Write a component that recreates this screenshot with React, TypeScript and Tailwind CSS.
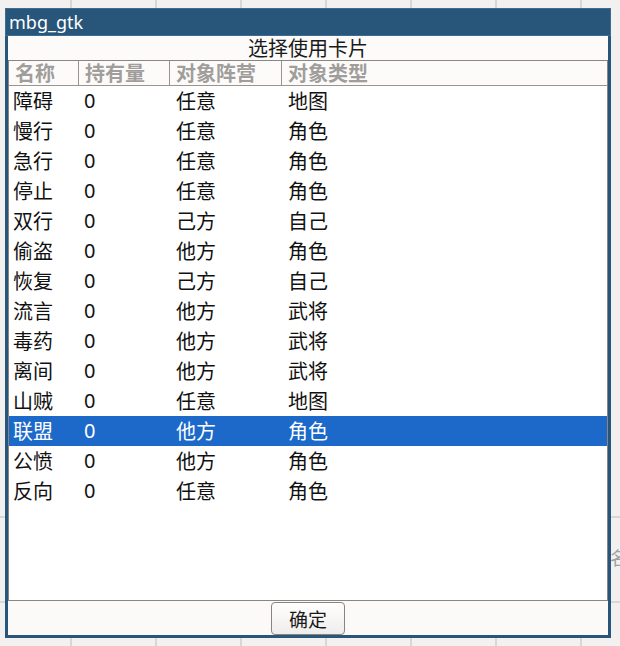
import React from "react";

interface Card {
  name: string;
  count: number;
  camp: string;
  kind: string;
}

const cards: Card[] = [
  { name: "障碍", count: 0, camp: "任意", kind: "地图" },
  { name: "慢行", count: 0, camp: "任意", kind: "角色" },
  { name: "急行", count: 0, camp: "任意", kind: "角色" },
  { name: "停止", count: 0, camp: "任意", kind: "角色" },
  { name: "双行", count: 0, camp: "己方", kind: "自己" },
  { name: "偷盗", count: 0, camp: "他方", kind: "角色" },
  { name: "恢复", count: 0, camp: "己方", kind: "自己" },
  { name: "流言", count: 0, camp: "他方", kind: "武将" },
  { name: "毒药", count: 0, camp: "他方", kind: "武将" },
  { name: "离间", count: 0, camp: "他方", kind: "武将" },
  { name: "山贼", count: 0, camp: "任意", kind: "地图" },
  { name: "联盟", count: 0, camp: "他方", kind: "角色" },
  { name: "公愤", count: 0, camp: "他方", kind: "角色" },
  { name: "反向", count: 0, camp: "任意", kind: "角色" },
];

const SELECTED = 11;

export default function App() {
  return (
    <div
      className="w-[620px] h-[646px] overflow-hidden flex bg-[#f2f1f0] bg-[repeating-linear-gradient(90deg,transparent_0_70px,#d9d7d4_70px_72px,transparent_72px_85px),linear-gradient(180deg,transparent_0_516px,#d9d7d4_516px_518px,transparent_518px_601px,#d9d7d4_601px_603px,transparent_603px)] pt-[8px] pl-[5px] font-['Noto_Sans','Noto_Sans_CJK_SC',sans-serif]"
    >
      {/* Dialog */}
      <div className="w-[606px] h-[630px] flex flex-col shrink-0">
        {/* Title bar */}
        <div className="h-[28px] bg-[#28557a] border border-[#3d6c92] text-white text-[18px] leading-[26px] pl-[3px]">
          mbg_gtk
        </div>
        <div className="flex-1 flex flex-col border-x-[3px] border-b-[3px] border-[#28557a] bg-[#fcfbfa]">
          {/* Heading */}
          <div className="h-[24px] text-center text-[20px] leading-[24px] text-[#1a1a1a] font-['Noto_Sans_CJK_SC',sans-serif]">
            选择使用卡片
          </div>

          {/* Tree view */}
          <div className="flex-1 border border-[#8b8681] bg-white font-['Noto_Sans_CJK_SC',sans-serif] text-[20px]">
            <div className="h-[25px] flex border-b border-[#9a958f] bg-[#fcfbfa] text-[#a09d9a] font-bold leading-[23px]">
              <div className="w-[70px] pl-[6px] border-r border-[#9a958f]">名称</div>
              <div className="w-[91px] pl-[6px] border-r border-[#9a958f]">持有量</div>
              <div className="w-[112px] pl-[6px] border-r border-[#9a958f]">对象阵营</div>
              <div className="flex-1 pl-[6px]">对象类型</div>
            </div>
            {cards.map((c, i) => (
              <div
                key={c.name}
                className={`h-[30px] flex items-center leading-none ${
                  i === SELECTED ? "bg-[#1c69c9] text-white" : "text-[#111]"
                }`}
              >
                <div className="w-[71px] pl-[4px]">{c.name}</div>
                <div className="w-[91px] pl-[4px] font-['Noto_Sans',sans-serif]">{c.count}</div>
                <div className="w-[112px] pl-[5px]">{c.camp}</div>
                <div className="flex-1 pl-[5px]">{c.kind}</div>
              </div>
            ))}
          </div>

          {/* Footer */}
          <div className="h-[34px] flex justify-center items-start bg-[#fbfaf9]">
            <button className="mt-[1px] w-[74px] h-[33px] rounded-[4px] border border-[#8a847e] bg-gradient-to-b from-white to-[#efedeb] text-[19px] text-[#1a1a1a] leading-none font-['Noto_Sans_CJK_SC',sans-serif]">
              确定
            </button>
          </div>
        </div>
      </div>

      {/* Window behind, partly visible */}
      <div className="flex-1 overflow-hidden pt-[540px] text-[18px] text-[#9aa0a6] font-['Noto_Sans_CJK_SC',sans-serif] leading-none">
        <span className="block -ml-[1px] w-[20px]">名</span>
      </div>
    </div>
  );
}
